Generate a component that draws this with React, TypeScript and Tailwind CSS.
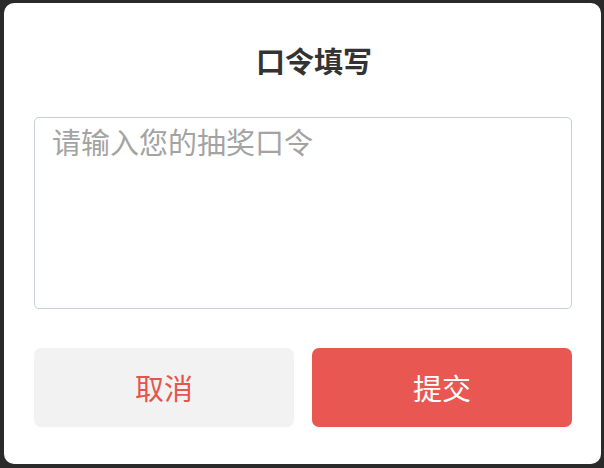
import { useState } from 'react';

export default function App() {
  const [code, setCode] = useState('');

  return (
    <div
      className="w-[604px] h-[468px] bg-[#2a2a2a] pt-[3px] pl-[4px] overflow-hidden"
      style={{ fontFamily: '"Noto Sans CJK SC", "Noto Sans", sans-serif' }}
    >
      <div className="w-[597px] h-[461px] bg-white rounded-[10px] pl-[30px] pr-[29px] pt-[37px] flex flex-col">
        <h2 className="pl-[22px] text-center text-[29px] leading-[40px] font-bold text-[#333333]">口令填写</h2>

        <textarea
          value={code}
          onChange={(e) => setCode(e.target.value)}
          placeholder="请输入您的抽奖口令"
          className="mt-[37px] h-[192px] w-full resize-none rounded-[5px] border border-[#c7cedd] px-[17px] pt-[3px] text-[29px] leading-[40px] text-[#333333] placeholder:text-[#a3a3a3] outline-none"
        />

        <div className="mt-[39px] flex gap-[18px]">
          <button className="flex-1 h-[79px] rounded-[7px] bg-[#f2f2f2] text-[29px] text-[#e5554f]">
            取消
          </button>
          <button className="flex-1 h-[79px] rounded-[7px] bg-[#e85751] text-[29px] text-white">
            提交
          </button>
        </div>
      </div>
    </div>
  );
}
